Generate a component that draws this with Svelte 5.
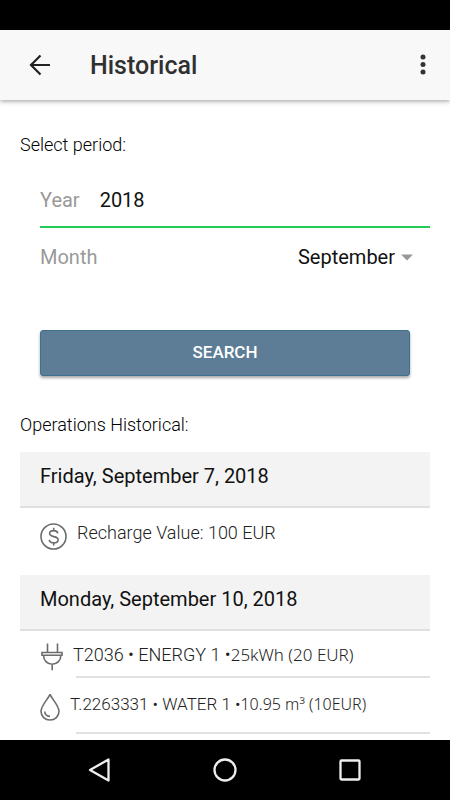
<script lang="ts">
    let year = $state('2018');
    let month = $state('September');

    const months = [
        'January',
        'February',
        'March',
        'April',
        'May',
        'June',
        'July',
        'August',
        'September',
        'October',
        'November',
        'December',
    ];
</script>

<div class="screen">
    <div class="status_bar"></div>

    <header>
        <button type="button" aria-label="Back">
            <svg width="22" height="22" viewBox="0 0 22 22">
                <path d="M11.5 1.5 2 11l9.5 9.5M2 11h19" />
            </svg>
        </button>
        <h1>Historical</h1>
        <button type="button" aria-label="More options">
            <svg class="dots" width="6" height="22" viewBox="0 0 6 22">
                <circle cx="3" cy="3" r="2.5" />
                <circle cx="3" cy="10.5" r="2.5" />
                <circle cx="3" cy="18" r="2.5" />
            </svg>
        </button>
    </header>

    <main>
        <h2>Select period:</h2>

        <form onsubmit={(e) => e.preventDefault()}>
            <div class="field year">
                <label for="year">Year</label>
                <input id="year" type="text" inputmode="numeric" bind:value={year} />
            </div>
            <div class="field month">
                <label for="month">Month</label>
                <select id="month" bind:value={month}>
                    {#each months as name}
                        <option value={name}>{name}</option>
                    {/each}
                </select>
                <svg class="caret" width="12" height="7" viewBox="0 0 12 7">
                    <path d="M0 .5h12L6 6.5z" />
                </svg>
            </div>
            <button type="submit" class="search">SEARCH</button>
        </form>

        <h2>Operations Historical:</h2>

        <section class="recharge">
            <h3>Friday, September 7, 2018</h3>
            <ul>
                <li>
                    <svg width="27" height="27" viewBox="0 0 27 27">
                        <circle cx="13.5" cy="13.5" r="12.5" />
                        <path d="M17.8 10.2c-.4-1.600-1.900-2.600-4.100-2.600-2.400 0-4.100 1.200-4.100 3 0 4.300 8.500 1.700 8.500 6.100 0 1.900-1.800 3.100-4.300 3.100s-4.300-1.100-4.600-3M13.700 4.800v2.800M13.700 19.800v2.700" />
                    </svg>
                    <p>Recharge Value: 100 <span class="unit">EUR</span></p>
                </li>
            </ul>
        </section>

        <section class="meters">
            <h3>Monday, September 10, 2018</h3>
            <ul>
                <li class="energy">
                    <svg width="24" height="28" viewBox="0 0 24 28">
                        <path d="M7.500.5v9M17.500.5v9M2 9.500h20v2.700H2zM3.500 12.200c0 5.200 3.700 9 8.700 9s8.700-3.800 8.700-9M12.200 21.200v6" />
                    </svg>
                    <p>T2036 • ENERGY 1 •<span class="amount">25kWh (20 EUR)</span></p>
                </li>
                <li class="water">
                    <svg width="20" height="28" viewBox="0 0 20 28">
                        <path d="M10 1.200C9.200 4.500 1 12.500 1 18.300c0 5.100 4 8.700 9 8.700s9-3.600 9-8.700C19 12.500 10.800 4.500 10 1.200zM4.700 18.500c.2 2.900 2.200 4.700 5.300 4.900" />
                    </svg>
                    <p>T.2263331 • WATER 1 •<span class="amount">10.95 m³ (10EUR)</span></p>
                </li>
            </ul>
        </section>
    </main>

    <nav>
        <button type="button" aria-label="Back">
            <svg width="26" height="26" viewBox="0 0 26 26">
                <path d="M21.500 2.500v21L3 13z" />
            </svg>
        </button>
        <button type="button" aria-label="Home">
            <svg width="26" height="26" viewBox="0 0 26 26">
                <circle cx="13" cy="13" r="10.5" />
            </svg>
        </button>
        <button type="button" aria-label="Recent apps">
            <svg width="26" height="26" viewBox="0 0 26 26">
                <rect x="3.5" y="3.5" width="19" height="19" rx="1" />
            </svg>
        </button>
    </nav>
</div>

<style>
    :global(body) {
        margin: 0;
        background: #fff;
    }

    .screen {
        min-height: 100vh;
        display: flex;
        flex-direction: column;
        background: #fff;
        color: #111;
        font-family: Roboto, 'Liberation Sans', sans-serif;
    }

    button,
    input,
    select {
        font: inherit;
        color: inherit;
        border: 0;
        padding: 0;
        background: none;
    }

    svg {
        display: block;
        flex: none;
        fill: none;
        stroke: #6c6c6c;
        stroke-width: 1.6;
    }

    .status_bar {
        height: 30px;
        background: #000;
    }

    header {
        height: 70px;
        display: flex;
        align-items: center;
        padding: 0 24px 0 29px;
        background: #f8f8f8;
        box-shadow: 0 1px 5px rgba(0, 0, 0, 0.4);
    }

    header svg {
        stroke: #222;
        stroke-width: 2.2;
    }

    header .dots {
        fill: #333;
        stroke: none;
    }

    h1 {
        flex: 1;
        margin: 0 0 0 39px;
        font-size: 25px;
        font-weight: 500;
        color: #303030;
    }

    main {
        flex: 1;
        padding: 35px 20px 6px;
    }

    h2 {
        margin: 0;
        color: #000;
        font-size: 18px;
        font-weight: 300;
        line-height: 20px;
    }

    form {
        padding: 22px 0 39px 20px;
    }

    .field {
        display: flex;
        align-items: center;
        font-size: 20px;
        line-height: 24px;
    }

    .field label {
        color: #999;
    }

    .year {
        height: 45px;
        gap: 20px;
        padding-bottom: 4px;
        border-bottom: 2px solid #2c5;
    }

    .year input {
        flex: 1;
        min-width: 0;
        outline: 0;
    }

    .month {
        height: 58px;
        gap: 6px;
        padding-right: 17px;
    }

    .month select {
        flex: 1;
        min-width: 0;
        appearance: none;
        text-align: right;
        text-align-last: right;
    }

    .caret {
        fill: #999;
        stroke: none;
    }

    .search {
        display: block;
        width: calc(100% - 20px);
        height: 46px;
        margin-top: 44px;
        padding-bottom: 2px;
        border: 1px solid #3d718e;
        border-radius: 3px;
        background: #5d7d96;
        box-shadow: 0 2px 3px rgba(0, 0, 0, 0.35);
        color: #fff;
        font-size: 17px;
        font-weight: 500;
    }

    section {
        margin-top: 17px;
    }

    .meters {
        margin-top: 0;
    }

    h3 {
        margin: 0;
        padding: 12px 20px 18px;
        border-bottom: 2px solid #e0e0e0;
        background: #f3f3f3;
        font-size: 20px;
        font-weight: 400;
        line-height: 24px;
    }

    ul {
        margin: 0;
        padding: 0 0 0 20px;
        list-style: none;
    }

    li {
        display: flex;
        color: #222;
        font-size: 18px;
        font-weight: 300;
        line-height: 20px;
    }

    li p {
        flex: 1;
        margin: 0;
        white-space: nowrap;
    }

    .recharge li {
        height: 52px;
        gap: 10px;
        padding-top: 15px;
    }

    .meters li {
        position: relative;
    }

    /* the divider starts to the right of the icon column */
    .meters li::after {
        content: '';
        position: absolute;
        left: 36px;
        right: 0;
        bottom: 0;
        height: 2px;
        background: #e2e2e2;
    }

    .energy {
        height: 47px;
        gap: 9px;
    }

    .energy svg {
        margin-top: 12px;
    }

    .energy p {
        margin-top: 14px;
    }

    .energy .amount {
        font-size: 17px;
    }

    .water {
        height: 56px;
        gap: 10px;
        font-size: 17px;
    }

    .water svg {
        margin-top: 15px;
    }

    .water p {
        margin-top: 16px;
    }

    .water .amount {
        font-size: 16px;
    }

    .amount {
        font-family: 'Noto Sans', 'Open Sans', sans-serif;
    }

    nav {
        height: 60px;
        display: flex;
        align-items: center;
        justify-content: space-between;
        padding: 0 87px;
        background: #000;
    }

    nav svg {
        stroke: #eee;
        stroke-width: 2.3;
        stroke-linejoin: round;
    }
</style>
